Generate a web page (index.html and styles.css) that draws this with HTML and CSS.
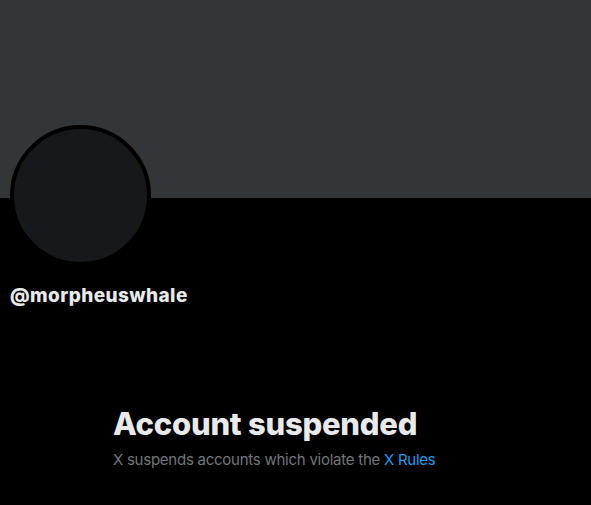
FILE: index.html
```html
<!DOCTYPE html>
<html>
<head>
<meta charset="utf-8">
<link rel="stylesheet" href="styles.css">
</head>
<body>
<div class="page">
  <div class="banner"></div>
  <div class="profile">
    <div class="avatar"></div>
    <div class="handle">@morpheuswhale</div>
  </div>
  <div class="notice">
    <div class="title">Account suspended</div>
    <div class="sub">X suspends accounts which violate the <a href="#" class="link">X Rules</a></div>
  </div>
</div>
</body>
</html>
```
FILE: styles.css
```css
html, body {
  margin: 0;
  padding: 0;
  background: #000;
}
.page {
  width: 591px;
  height: 505px;
  background: #000;
  font-family: Inter, "Liberation Sans", sans-serif;
  color: #e7e9ea;
  overflow: hidden;
}
.banner {
  height: 198px;
  background: #333639;
}
.profile {
  padding: 0 10px;
}
.avatar {
  width: 133px;
  height: 133px;
  border: 4px solid #000;
  border-radius: 50%;
  background: #16181c;
  margin-top: -73px;
}
.handle {
  margin-top: 18px;
  font-size: 19px;
  font-weight: 800;
  line-height: 24px;
  letter-spacing: 0.4px;
}
.notice {
  padding: 98px 0 0 113px;
}
.title {
  font-size: 31px;
  font-weight: 800;
  line-height: 36px;
  letter-spacing: -0.25px;
}
.sub {
  margin-top: 8px;
  font-size: 15px;
  line-height: 20px;
  color: #71767b;
  letter-spacing: -0.25px;
}
.link {
  color: #1d9bf0;
  text-decoration: none;
}
```
